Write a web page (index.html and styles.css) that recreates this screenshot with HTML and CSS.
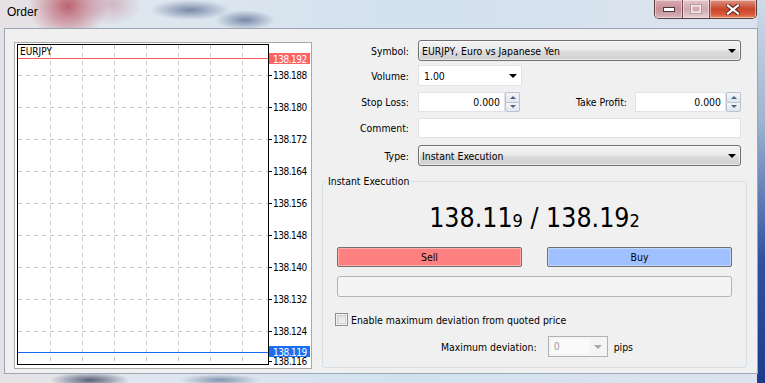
FILE: index.html
```html
<!DOCTYPE html>
<html>
<head>
<meta charset="utf-8">
<title>Order</title>
<link rel="stylesheet" href="styles.css">
</head>
<body>
<div class="titlebar">
  <span class="title">Order</span>
  <div class="caption-btns">
    <span class="cbtn min"><svg width="12" height="6" viewBox="0 0 12 6"><rect x="0.5" y="1.5" width="11" height="4" fill="#fff" stroke="#4a3a40"/></svg></span>
    <span class="cbtn max"><svg width="12" height="10" viewBox="0 0 12 10"><rect x="1.5" y="1.5" width="9" height="7" fill="none" stroke="rgba(255,255,255,.75)" stroke-width="2"/><rect x="0.5" y="0.5" width="11" height="9" fill="none" stroke="rgba(90,60,70,.35)"/></svg></span>
    <span class="cbtn close"><svg width="14" height="11" viewBox="0 0 14 11"><path d="M2 1.5 L12 9.5 M12 1.5 L2 9.5" stroke="#5a2a20" stroke-width="4.2" stroke-linecap="square"/><path d="M2 1.5 L12 9.5 M12 1.5 L2 9.5" stroke="#fff" stroke-width="2.2" stroke-linecap="square"/></svg></span>
  </div>
</div>

<div class="client">
  <div class="chart">
    <svg class="chart-svg" width="296" height="325" viewBox="0 0 296 325">
      <g stroke="#c6c6c6" stroke-dasharray="4 4" fill="none">
        <path d="M35.5 2V321M67.5 2V321M99.5 2V321M131.5 2V321M163.5 2V321M195.5 2V321M227.5 2V321"/>
        <path d="M3 32.5H253M3 64.5H253M3 96.5H253M3 128.5H253M3 160.5H253M3 192.5H253M3 224.5H253M3 256.5H253M3 288.5H253"/>
      </g>
      <rect x="2.5" y="1.5" width="251" height="320" fill="none" stroke="#000"/>
      <path stroke="#000" d="M254 32.5h3M254 64.5h3M254 96.5h3M254 128.5h3M254 160.5h3M254 192.5h3M254 224.5h3M254 256.5h3M254 288.5h3M254 318.5h3"/>
      <text x="5" y="12" class="sym">EURJPY</text>
      <g class="axis">
        <text x="258" y="36">138.188</text>
        <text x="258" y="68">138.180</text>
        <text x="258" y="100">138.172</text>
        <text x="258" y="132">138.164</text>
        <text x="258" y="164">138.156</text>
        <text x="258" y="196">138.148</text>
        <text x="258" y="228">138.140</text>
        <text x="258" y="260">138.132</text>
        <text x="258" y="292">138.124</text>
        <text x="258" y="322">138.116</text>
      </g>
      <path d="M3 15.5H253" stroke="#ff5a5a"/>
      <rect x="254" y="10" width="41" height="11" fill="#ff6464"/>
      <text x="258" y="19.5" class="axis tag">138.192</text>
      <path d="M3 309.5H253" stroke="#1668f0"/>
      <rect x="254" y="303" width="41" height="11" fill="#1a6ef0"/>
      <text x="258" y="312.5" class="axis tag">138.119</text>
    </svg>
  </div>

  <div class="panel">
    <div class="row r1">
      <span class="lbl">Symbol:</span>
      <div class="combo btnlike w-full"><span>EURJPY, Euro vs Japanese Yen</span><i class="arrow"></i></div>
    </div>
    <div class="row r2">
      <span class="lbl">Volume:</span>
      <div class="combo edit w-vol"><span>1.00</span><i class="arrow"></i></div>
    </div>
    <div class="row r3">
      <span class="lbl">Stop Loss:</span>
      <div class="spin w-sl">
        <div class="field">0.000</div>
        <div class="spin-btns"><span class="up"><i></i></span><span class="down"><i></i></span></div>
      </div>
      <span class="lbl2">Take Profit:</span>
      <div class="spin w-tp">
        <div class="field">0.000</div>
        <div class="spin-btns"><span class="up"><i></i></span><span class="down"><i></i></span></div>
      </div>
    </div>
    <div class="row r4">
      <span class="lbl">Comment:</span>
      <div class="text-field w-full"></div>
    </div>
    <div class="row r5">
      <span class="lbl">Type:</span>
      <div class="combo btnlike w-full"><span>Instant Execution</span><i class="arrow"></i></div>
    </div>

    <fieldset class="group">
      <legend>Instant Execution</legend>
      <div class="price">138.11<small>9</small> / 138.19<small>2</small></div>
      <div class="actions">
        <div class="btn sell">Sell</div>
        <div class="btn buy">Buy</div>
      </div>
      <div class="progress"></div>
      <div class="check-row">
        <span class="checkbox"></span>
        <span class="check-lbl">Enable maximum deviation from quoted price</span>
      </div>
      <div class="dev-row">
        <span class="dev-lbl">Maximum deviation:</span>
        <div class="combo disabled"><span class="val">0</span><i class="arrow"></i></div>
        <span class="pips">pips</span>
      </div>
    </fieldset>
  </div>
</div>
</body>
</html>
```

FILE: styles.css
```css
html, body {
  margin: 0;
  padding: 0;
}
body {
  width: 765px;
  height: 383px;
  overflow: hidden;
  font-family: "DejaVu Sans Condensed", "DejaVu Sans", sans-serif;
  font-stretch: semi-condensed;
  font-size: 10.4px;
  color: #000;
  background:
    radial-gradient(ellipse 40px 34px at 68px 6px, rgba(185,85,100,.9), rgba(185,85,100,0)),
    radial-gradient(ellipse 30px 22px at 112px 4px, rgba(200,150,165,.6), rgba(200,150,165,0)),
    radial-gradient(ellipse 40px 10px at 190px 10px, rgba(40,60,110,.55), rgba(40,60,110,0)),
    radial-gradient(ellipse 30px 10px at 245px 20px, rgba(40,60,110,.55), rgba(40,60,110,0)),
    radial-gradient(ellipse 40px 8px at 90px 380px, rgba(30,40,70,.7), rgba(30,40,70,0)),
    radial-gradient(ellipse 40px 6px at 220px 380px, rgba(50,70,110,.5), rgba(50,70,110,0)),
    linear-gradient(to bottom, #cfdbe8 0, #9fb4cf 120px, #3050a0 260px, #203a8a 383px) right top / 8px 100% no-repeat,
    linear-gradient(to right, #e7e1e4 0, #dfe7ef 120px, #d3e1ee 400px, #dbe4ee 765px);
}

/* title bar */
.titlebar {
  height: 28px;
  display: flex;
  justify-content: space-between;
  align-items: flex-start;
}
.title {
  font-family: "Liberation Sans", Arial, sans-serif;
  font-size: 12px;
  line-height: 14px;
  margin: 5px 0 0 7px;
}
.caption-btns {
  display: flex;
  margin-right: 8px;
  height: 18px;
  border: 1px solid #5c3c44;
  border-top: none;
  border-radius: 0 0 5px 5px;
  overflow: hidden;
}
.cbtn {
  display: flex;
  align-items: center;
  justify-content: center;
  height: 18px;
  box-shadow: inset 0 0 0 1px rgba(255,255,255,.45);
}
.cbtn.min {
  width: 27px;
  border-right: 1px solid #6c4a52;
  background: linear-gradient(to bottom, #d9aab0 0, #c88e96 50%, #d7b4b8 100%);
}
.cbtn.max {
  width: 26px;
  border-right: 1px solid #6c4a52;
  background: linear-gradient(to bottom, #e4c4c8 0, #d3a8ae 50%, #e4cdd0 100%);
}
.cbtn.close {
  width: 46px;
  background: linear-gradient(to bottom, #e09484 0, #c9452c 50%, #d85a3a 80%, #e88a60 100%);
}

/* client */
.client {
  margin-left: 4px;
  width: 752px;
  height: 344px;
  border: 1px solid #9aa6b4;
  background: #f0f0f0;
  display: flex;
  align-items: flex-start;
}

.chart {
  margin: 13px 0 0 9px;
  width: 296px;
  height: 325px;
  border: 1px solid #a9a9a9;
  background: #fff;
}
.chart-svg {
  display: block;
}
.chart-svg text {
  font-family: "DejaVu Sans Condensed", "DejaVu Sans", sans-serif;
  font-size: 10px;
  fill: #000;
}
.chart-svg .axis text, .chart-svg text.axis {
  letter-spacing: -0.5px;
}
.chart-svg text.tag {
  fill: #fff;
}

/* form panel */
.panel {
  margin: 11px 0 0 10px;
  width: 425px;
  display: flex;
  flex-direction: column;
}
.row {
  display: flex;
  align-items: center;
}
.r1 { height: 21px; }
.r2 { height: 21px; margin-top: 4px; }
.r3 { height: 20px; margin-top: 6px; }
.r4 { height: 20px; margin-top: 6px; }
.r5 { height: 21px; margin-top: 7px; }

.lbl {
  width: 87px;
  margin-right: 9px;
  text-align: right;
}
.lbl2 {
  width: 107px;
  padding-right: 8px;
  text-align: right;
}
.w-full { width: 323px; }
.w-vol { width: 104px; }
.w-sl { width: 102px; }
.w-tp { width: 106px; }

.combo {
  box-sizing: border-box;
  height: 100%;
  display: flex;
  align-items: center;
  padding-left: 3px;
}
.combo .arrow {
  margin-left: auto;
  margin-right: 4px;
  width: 0;
  height: 0;
  border-left: 4px solid transparent;
  border-right: 4px solid transparent;
  border-top: 4px solid #000;
}
.btnlike {
  border: 1px solid #707070;
  border-radius: 3px;
  background: linear-gradient(to bottom, #f2f2f2 0, #ebebeb 48%, #dddddd 52%, #cfcfcf 100%);
  box-shadow: inset 0 0 0 1px rgba(255,255,255,.6);
}
.edit {
  border: 1px solid #dfe3e8;
  background: #fff;
  padding-left: 5px;
}
.edit .arrow { margin-right: 4px; }

.text-field {
  box-sizing: border-box;
  height: 100%;
  border: 1px solid #dfe3e8;
  background: #fff;
}

.spin {
  box-sizing: border-box;
  height: 100%;
  display: flex;
}
.spin .field {
  flex: 1;
  border: 1px solid #dfe3e8;
  background: #fff;
  text-align: right;
  padding-right: 4px;
  display: flex;
  align-items: center;
  justify-content: flex-end;
}
.spin-btns {
  width: 15px;
  display: flex;
  flex-direction: column;
}
.spin-btns span {
  flex: 1;
  display: flex;
  align-items: center;
  justify-content: center;
  border: 1px solid #b9c3cf;
  background: linear-gradient(to bottom, #f3f6f9, #dfe6ee);
}
.spin-btns .up { border-bottom: none; border-radius: 2px 2px 0 0; }
.spin-btns .down { border-radius: 0 0 2px 2px; }
.spin-btns .up i {
  width: 0; height: 0;
  border-left: 3px solid transparent;
  border-right: 3px solid transparent;
  border-bottom: 3px solid #4d6185;
}
.spin-btns .down i {
  width: 0; height: 0;
  border-left: 3px solid transparent;
  border-right: 3px solid transparent;
  border-top: 3px solid #4d6185;
}

/* group box */
.group {
  margin: 9px 0 0 0;
  padding: 0 14px 10px 14px;
  border: 1px solid #d5dfe5;
  border-radius: 3px;
  min-width: 0;
}
.group legend {
  padding: 0 2px;
  margin-left: -11px;
  line-height: 12px;
}
.price {
  margin-top: 16px;
  height: 30px;
  line-height: 30px;
  font-size: 26.5px;
  text-align: center;
}
.price small {
  font-size: 18px;
}
.actions {
  margin-top: 14px;
  display: flex;
  justify-content: space-between;
}
.btn {
  box-sizing: border-box;
  width: 185px;
  height: 20px;
  line-height: 18px;
  text-align: center;
  border: 1px solid #707070;
  border-radius: 2px;
  box-shadow: inset 0 0 0 1px rgba(255,255,255,.35);
}
.sell { background: #ff8080; }
.buy { background: #a0c0ff; }

.progress {
  margin-top: 9px;
  height: 19px;
  border: 1px solid #b4b4b4;
  border-radius: 3px;
  background: #f4f4f4;
}

.check-row {
  margin-top: 16px;
  display: flex;
  align-items: center;
  height: 13px;
}
.checkbox {
  margin-left: -2px;
  box-sizing: border-box;
  width: 13px;
  height: 13px;
  border: 1px solid #8f8f8f;
  background: linear-gradient(135deg, #dcdcdc, #f6f6f6);
  box-shadow: inset 0 0 0 1px #f4f4f4, inset 0 0 0 2px #cfcfcf;
}
.check-lbl {
  margin-left: 3px;
}

.dev-row {
  margin-top: 10px;
  height: 21px;
  display: flex;
  align-items: center;
}
.dev-lbl {
  margin-left: 104px;
  margin-right: 11px;
}
.combo.disabled {
  width: 60px;
  border: 1px solid #adb2b5;
  background: #f4f4f4;
  padding-left: 2px;
}
.combo.disabled .val {
  width: 36px;
  height: 15px;
  line-height: 15px;
  padding-left: 3px;
  background: #fafafa;
  color: #9a9a9a;
}
.combo.disabled .arrow {
  border-top-color: #a8a8a8;
  margin-right: 5px;
}
.pips {
  margin-left: 6px;
}
```
